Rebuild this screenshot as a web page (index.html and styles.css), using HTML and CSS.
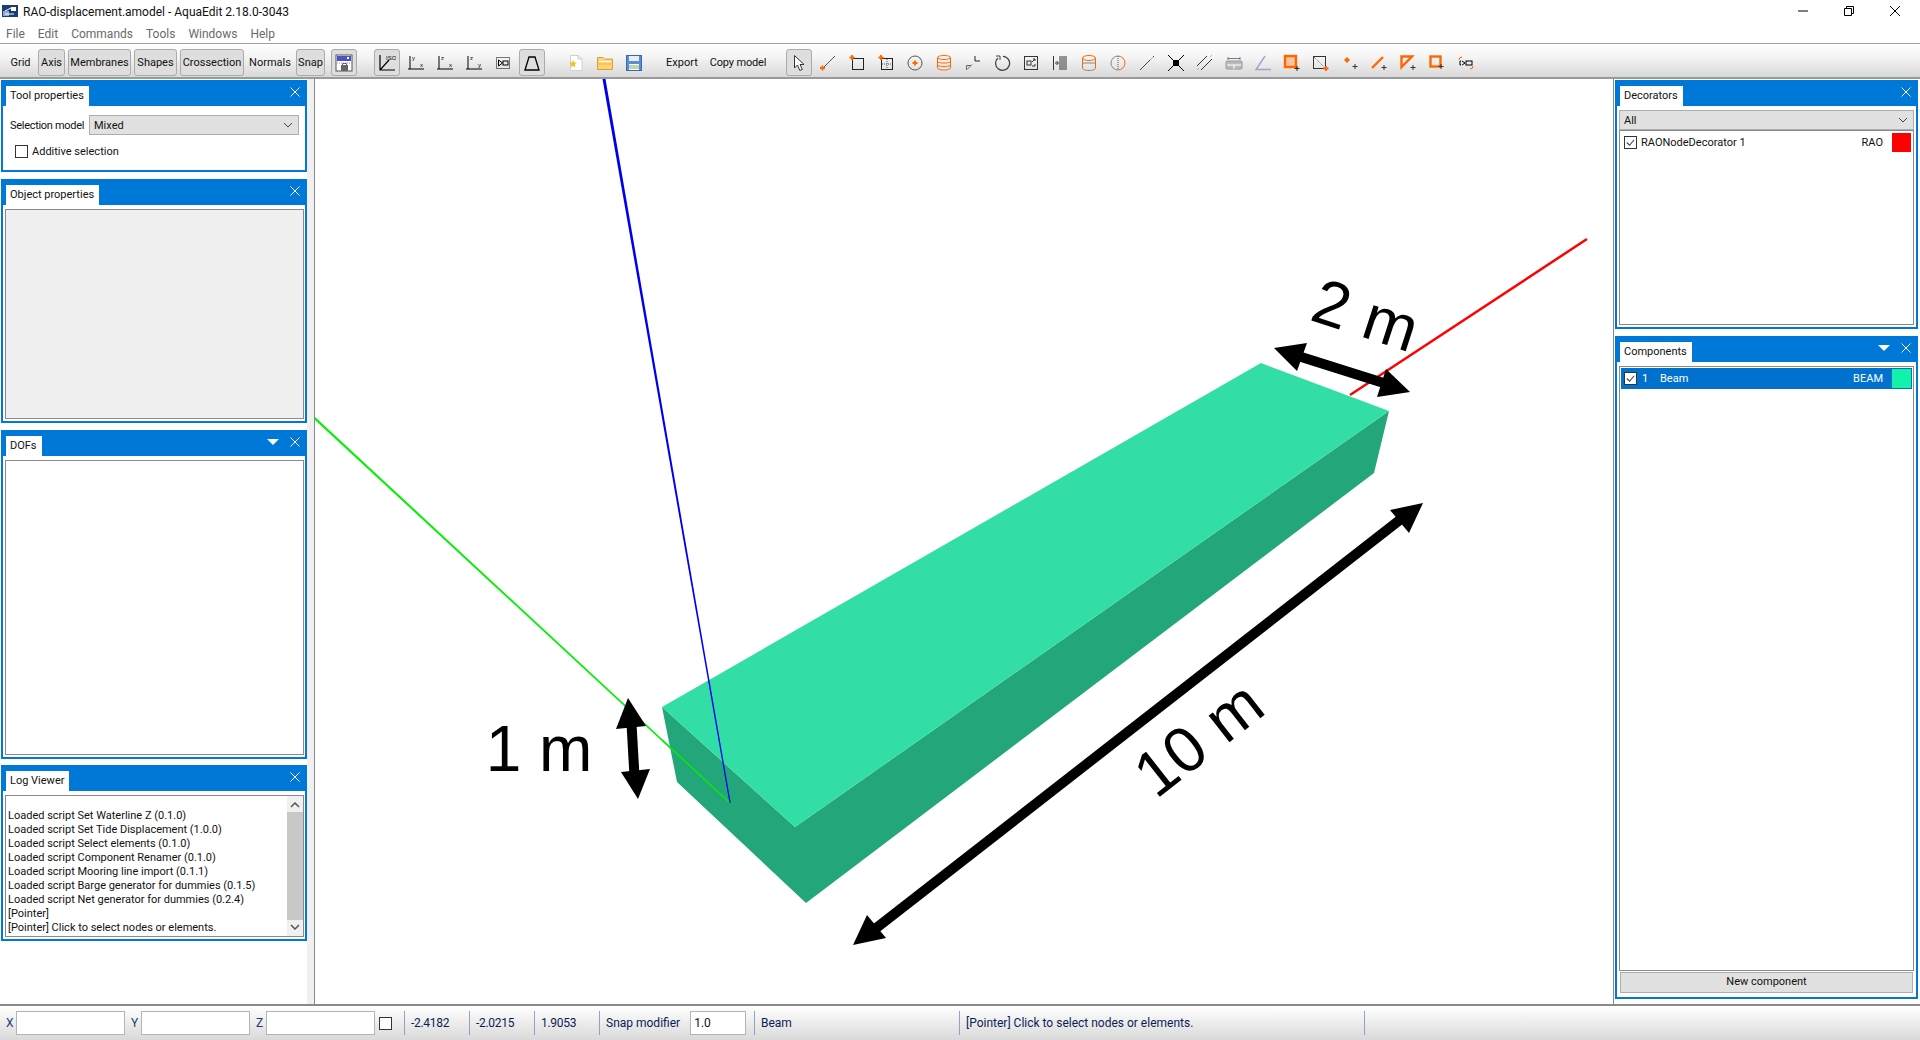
FILE: index.html
```html
<!DOCTYPE html>
<html lang="en">
<head>
<meta charset="utf-8">
<title>RAO-displacement.amodel - AquaEdit 2.18.0-3043</title>
<link rel="stylesheet" href="styles.css">
</head>
<body>
<div class="app">
  <header class="titlebar">
    <svg class="appicon" viewBox="0 0 16 12"><rect width="16" height="12" fill="#1a3c78"/><rect x="1" y="6" width="6" height="5" fill="#8fa8d0"/><rect x="9" y="2" width="5" height="4" fill="#fff"/><path d="M3 6L9 3M3 9L12 9" stroke="#fff" fill="none"/></svg>
    <span class="titletext">RAO-displacement.amodel - AquaEdit 2.18.0-3043</span>
    <div class="winbtns">
      <svg class="winicon" viewBox="0 0 12 12"><path d="M1 6H11" stroke="#000"/></svg>
      <svg class="winicon" viewBox="0 0 12 12"><path d="M1.500 3.500H8.500V10.500H1.500ZM3.500 3.500V1.500H10.500V8.500H8.500" stroke="#000" fill="none"/></svg>
      <svg class="winicon" viewBox="0 0 12 12"><path d="M1 1L11 11M11 1L1 11" stroke="#000"/></svg>
    </div>
  </header>
  <nav class="menubar"><span>File</span><span>Edit</span><span>Commands</span><span>Tools</span><span>Windows</span><span>Help</span></nav>
  <div class="toolbar">
    <span class="tb t-grid">Grid</span>
    <span class="tb on t-axis">Axis</span>
    <span class="tb on t-mem">Membranes</span>
    <span class="tb on t-sha">Shapes</span>
    <span class="tb on t-cro">Crossection</span>
    <span class="tb t-nor">Normals</span>
    <span class="tb on t-sna">Snap</span>
    <span class="tb on ic g0"><svg class="i" viewBox="0 0 18 18"><rect x="1" y="1" width="16" height="16" fill="#fff" stroke="#555"/><rect x="2" y="2" width="14" height="5" fill="#4a52c8"/><path d="M12 3l2 2M14 3l-2 2" stroke="#fff"/><path d="M2 9h14" stroke="#999" stroke-dasharray="1 1"/><rect x="6" y="11" width="7" height="6" fill="#666"/><path d="M7.500 11V9.500h4V11" stroke="#666" fill="none"/></svg></span>
    <span class="tb on ic g1"><svg class="i" viewBox="0 0 18 18"><path d="M2 1V16H17M2 16L11 6" stroke="#000" fill="none" stroke-width="1.200"/><text x="8" y="6" class="it">ISO</text></svg></span>
    <span class="tb ic"><svg class="i" viewBox="0 0 18 18"><path d="M3 2V15H17M1 15H3" stroke="#000" fill="none"/><text x="5" y="6" class="it">y</text><text x="13" y="13" class="it">x</text></svg></span>
    <span class="tb ic"><svg class="i" viewBox="0 0 18 18"><path d="M3 2V15H17M1 15H3" stroke="#000" fill="none"/><text x="5" y="6" class="it">z</text><text x="13" y="13" class="it">x</text></svg></span>
    <span class="tb ic"><svg class="i" viewBox="0 0 18 18"><path d="M3 2V15H17M1 15H3" stroke="#000" fill="none"/><text x="5" y="6" class="it">z</text><text x="13" y="13" class="it">y</text></svg></span>
    <span class="tb ic"><svg class="i" viewBox="0 0 18 18"><rect x="2.500" y="3.500" width="13" height="11" fill="none" stroke="#000" stroke-dasharray="1 1"/><path d="M4.500 6V12L8.500 9Z" fill="none" stroke="#000"/><rect x="9" y="7" width="5" height="4" fill="none" stroke="#000"/></svg></span>
    <span class="tb on ic"><svg class="i" viewBox="0 0 18 18"><path d="M2 16L6 3H12L16 16Z" fill="none" stroke="#000" stroke-width="1.300"/></svg></span>
    <span class="tb ic g2"><svg class="i" viewBox="0 0 18 18"><path d="M3.500 1.500H11L15 5V16.500H3.500Z" fill="#fff" stroke="#cfcfcf"/><path d="M11 1.500V5H15" fill="#eee" stroke="#cfcfcf"/><path d="M6 6l1.200 2.400 2.600.4-1.900 1.800.5 2.600L6 11.900l-2.400 1.300.5-2.600L2.200 8.800l2.600-.4Z" fill="#f6c02c"/></svg></span>
    <span class="tb ic"><svg class="i" viewBox="0 0 18 18"><path d="M1.500 3.500H7L8.500 5H16.500V15.500H1.500Z" fill="#fbd477" stroke="#d9a030"/><path d="M3 7.500H15" stroke="#fff"/><path d="M1.500 10H16.500" stroke="#f2b840"/></svg></span>
    <span class="tb ic"><svg class="i" viewBox="0 0 18 18"><rect x="1.500" y="1.500" width="15" height="15" fill="#5a8ed6" stroke="#3a68b0"/><rect x="4" y="2" width="10" height="5" fill="#e8eef8"/><rect x="4" y="10" width="10" height="6" fill="#fff"/><path d="M4 12H14M4 14H14" stroke="#7ab45a"/></svg></span>
    <span class="tb t-exp">Export</span>
    <span class="tb t-cop">Copy model</span>
    <span class="tb on ic g3"><svg class="i" viewBox="0 0 18 18"><path d="M4.500 1.500V14L7.500 11L9.800 16.500L12.300 15.400L10 10.500H14Z" fill="#fff" stroke="#333"/></svg></span>
    <span class="tb ic"><svg class="i" viewBox="0 0 18 18"><path d="M4 14L16 2" stroke="#555"/><path d="M3.500 11.500v5M1 14h5" stroke="#f60" stroke-width="1.800"/></svg></span>
    <span class="tb ic"><svg class="i" viewBox="0 0 18 18"><rect x="4.500" y="4.500" width="11" height="11" fill="none" stroke="#222"/><path d="M4 1v5M1.500 3.500h5" stroke="#f60" stroke-width="1.800"/></svg></span>
    <span class="tb ic"><svg class="i" viewBox="0 0 18 18"><rect x="4.500" y="4.500" width="11" height="11" fill="none" stroke="#222"/><path d="M10 5v10M5 10h10" stroke="#555" stroke-dasharray="1 1"/><path d="M4 1v5M1.500 3.500h5" stroke="#f60" stroke-width="1.800"/></svg></span>
    <span class="tb ic"><svg class="i" viewBox="0 0 18 18"><circle cx="9" cy="9" r="7" fill="none" stroke="#555"/><path d="M9 6.500v5M6.500 9h5" stroke="#f60" stroke-width="1.800"/></svg></span>
    <span class="tb ic"><svg class="i" viewBox="0 0 18 18"><g fill="none" stroke="#f60"><ellipse cx="9" cy="3.500" rx="6.500" ry="2"/><path d="M2.500 7C2.500 8.300 5 9 9 9S15.500 8.300 15.500 7M2.500 10.500C2.500 11.800 5 12.500 9 12.500S15.500 11.800 15.500 10.500M2.500 3.500V14C2.500 15 5 16 9 16S15.500 15 15.500 14V3.500"/></g></svg></span>
    <span class="tb ic"><svg class="i" viewBox="0 0 18 18"><path d="M11 2V7H16" stroke="#222" fill="none"/><path d="M2.500 16V11.500H7M3 15.500L8 10.500" stroke="#666" fill="none"/></svg></span>
    <span class="tb ic"><svg class="i" viewBox="0 0 18 18"><path d="M5 4A7 7 0 1 0 10 2.300" fill="none" stroke="#444" stroke-width="1.300"/><path d="M3 2H7V6" fill="none" stroke="#444"/></svg></span>
    <span class="tb ic"><svg class="i" viewBox="0 0 18 18"><rect x="2.500" y="2.500" width="13" height="13" fill="none" stroke="#333"/><rect x="5" y="7" width="4" height="4" fill="none" stroke="#333"/><path d="M10 8l3-3M11 5h2v2M10 12h3v-2" stroke="#333" fill="none"/></svg></span>
    <span class="tb ic"><svg class="i" viewBox="0 0 18 18"><path d="M2.500 2V16M9 2V16M11 2V16M13 2V16M15 2V16" stroke="#333" fill="none"/><path d="M4 9H7M5.500 7L7.500 9L5.500 11" stroke="#333" fill="none"/></svg></span>
    <span class="tb ic"><svg class="i" viewBox="0 0 18 18"><ellipse cx="9" cy="4" rx="6.500" ry="2.500" fill="none" stroke="#f60"/><path d="M2.500 4V14M15.500 4V14" stroke="#f60"/><path d="M2.500 9H15.500" stroke="#888"/><path d="M2.500 14C2.500 15.500 5 16.500 9 16.500S15.500 15.500 15.500 14" fill="none" stroke="#888"/></svg></span>
    <span class="tb ic"><svg class="i" viewBox="0 0 18 18"><path d="M9 2A7 7 0 0 0 9 16" fill="none" stroke="#888"/><path d="M9 2A7 7 0 0 1 9 16" fill="none" stroke="#f60"/><path d="M9 2V16" stroke="#555" stroke-dasharray="1 1"/></svg></span>
    <span class="tb ic"><svg class="i" viewBox="0 0 18 18"><path d="M2 16L16 2" stroke="#444"/><path d="M12 6L15 3" stroke="#e8a030"/></svg></span>
    <span class="tb ic"><svg class="i" viewBox="0 0 18 18"><path d="M1 1L17 17M17 1L1 17" stroke="#000"/><rect x="6" y="6" width="6" height="6" fill="#000"/></svg></span>
    <span class="tb ic"><svg class="i" viewBox="0 0 18 18"><path d="M1 12L11 2M5 16L16 5" stroke="#333"/><path d="M1 16L3 14M14 3L16 1" stroke="#c8b080"/></svg></span>
    <span class="tb ic"><svg class="i" viewBox="0 0 18 18"><rect x="1" y="7" width="16" height="8" rx="1" fill="#b8bcc0" stroke="#999"/><path d="M2 11H16M9 11V15" stroke="#fff"/><path d="M3 3V6M15 3V6M3 4.500H15" stroke="#778"/></svg></span>
    <span class="tb ic"><svg class="i" viewBox="0 0 18 18"><path d="M11 2L2 15.500H17" fill="none" stroke="#9aa6c8" stroke-width="1.400"/></svg></span>
    <span class="tb ic"><svg class="i" viewBox="0 0 18 18"><rect x="2" y="2" width="11" height="11" fill="#ffc39a" stroke="#f60" stroke-width="2.400"/><path d="M14 12v5M11.500 14.500h5" stroke="#222"/></svg></span>
    <span class="tb ic"><svg class="i" viewBox="0 0 18 18"><rect x="1.500" y="2.500" width="12" height="12" fill="none" stroke="#333"/><path d="M2 3L13 14" stroke="#666" stroke-dasharray="1 1"/><path d="M14 12v5M11.500 14.500h5" stroke="#f60" stroke-width="1.800"/></svg></span>
    <span class="tb ic"><svg class="i" viewBox="0 0 18 18"><path d="M6 3L9 6L6 9L3 6Z" fill="#f60"/><path d="M14 10v5M11.500 12.500h5" stroke="#333"/></svg></span>
    <span class="tb ic"><svg class="i" viewBox="0 0 18 18"><path d="M2 14L13 3" stroke="#f60" stroke-width="2.400"/><path d="M14 11v5M11.500 13.500h5" stroke="#333"/></svg></span>
    <span class="tb ic"><svg class="i" viewBox="0 0 18 18"><path d="M2.500 2.500H13L2.500 13Z" fill="none" stroke="#f60" stroke-width="2.400"/><path d="M14 11v5M11.500 13.500h5" stroke="#333"/></svg></span>
    <span class="tb ic"><svg class="i" viewBox="0 0 18 18"><rect x="2.500" y="2.500" width="10" height="10" fill="none" stroke="#f60" stroke-width="2.400"/><path d="M13 10v5M10.500 12.500h5" stroke="#333"/></svg></span>
    <span class="tb ic"><svg class="i" viewBox="0 0 18 18"><path d="M5 3A3 3 0 0 0 2 6M13 15A3 3 0 0 0 16 12" fill="none" stroke="#f60"/><path d="M4 7H3V11H4M5 7L8 9L5 11" fill="none" stroke="#000"/><rect x="9" y="7" width="6" height="4" fill="none" stroke="#000"/></svg></span>
  </div>
  <div class="main">
    <aside class="dock-left">
      <section class="panel p-tool">
        <div class="phead"><span class="ptab">Tool properties</span><svg class="x" viewBox="0 0 10 10"><path d="M0.500 0.500L9.500 9.500M9.500 0.500L0.500 9.500" stroke="#fff"/></svg></div>
        <div class="pbody tool-body">
          <div class="sel-row"><span class="sel-label">Selection model</span><div class="combo c-sel"><span>Mixed</span><svg class="chev" viewBox="0 0 10 6"><path d="M1 1L5 5L9 1" stroke="#444" fill="none"/></svg></div></div>
          <label class="add-row"><span class="cb"></span><span>Additive selection</span></label>
        </div>
      </section>
      <section class="panel p-obj">
        <div class="phead"><span class="ptab">Object properties</span><svg class="x" viewBox="0 0 10 10"><path d="M0.500 0.500L9.500 9.500M9.500 0.500L0.500 9.500" stroke="#fff"/></svg></div>
        <div class="pbody"><div class="frame grey"></div></div>
      </section>
      <section class="panel p-dof">
        <div class="phead"><span class="ptab">DOFs</span><span class="tri"></span><svg class="x" viewBox="0 0 10 10"><path d="M0.500 0.500L9.500 9.500M9.500 0.500L0.500 9.500" stroke="#fff"/></svg></div>
        <div class="pbody"><div class="frame"></div></div>
      </section>
      <section class="panel p-log">
        <div class="phead"><span class="ptab">Log Viewer</span><svg class="x" viewBox="0 0 10 10"><path d="M0.500 0.500L9.500 9.500M9.500 0.500L0.500 9.500" stroke="#fff"/></svg></div>
        <div class="pbody"><div class="frame logframe">
          <div class="logtext">
            <div>Loaded script Set Waterline Z (0.1.0)</div>
            <div>Loaded script Set Tide Displacement (1.0.0)</div>
            <div>Loaded script Select elements (0.1.0)</div>
            <div>Loaded script Component Renamer (0.1.0)</div>
            <div>Loaded script Mooring line import (0.1.1)</div>
            <div>Loaded script Barge generator for dummies (0.1.5)</div>
            <div>Loaded script Net generator for dummies (0.2.4)</div>
            <div>[Pointer]</div>
            <div>[Pointer] Click to select nodes or elements.</div>
          </div>
          <div class="scroll">
            <svg class="sarrow" viewBox="0 0 10 6"><path d="M1 5L5 1L9 5" stroke="#555" stroke-width="1.500" fill="none"/></svg>
            <div class="thumb"></div>
            <svg class="sarrow" viewBox="0 0 10 6"><path d="M1 1L5 5L9 1" stroke="#555" stroke-width="1.500" fill="none"/></svg>
          </div>
        </div></div>
      </section>
    </aside>
    <main class="viewport">
      <svg class="scene" viewBox="315 79 1298 925" preserveAspectRatio="none">
        <polygon points="315,417 315,420 730,804 730,802" fill="#00f000"/>
        <polygon points="662,707 795,827 1389,411 1374,473 806,903 677,782" fill="#22a67a"/>
        <polygon points="662,707 1261,363 1389,411 795,827" fill="#33dea6"/>
        <line x1="730" y1="803" x2="662" y2="740" stroke="#00f000" stroke-width="1.500"/>
        <polygon points="602.500,79 605.500,79 730.700,803 729.500,803" fill="#0000f0"/>
        <line x1="1350" y1="395" x2="1587" y2="239" stroke="#ff0000" stroke-width="2.500"/>
        <g class="arrow">
          <line x1="1295" y1="355" x2="1390" y2="385" stroke="#000" stroke-width="10"/>
          <polygon points="1274,348 1307,343 1297,371"/>
          <polygon points="1410,392 1386,369 1377,397"/>
          <line x1="631" y1="715" x2="635" y2="785" stroke="#000" stroke-width="10"/>
          <polygon points="628,698 616,729 646,726"/>
          <polygon points="638,799 621,772 650,769"/>
          <line x1="875" y1="929" x2="1401" y2="519" stroke="#000" stroke-width="10"/>
          <polygon points="853,945 867,915 886,938"/>
          <polygon points="1423,503 1409,533 1390,510"/>
        </g>
        <text class="dim" x="539" y="771" text-anchor="middle">1 m</text>
        <text class="dim" text-anchor="middle" transform="translate(1359 336) rotate(18)">2 m</text>
        <text class="dim" text-anchor="middle" transform="translate(1212 756) rotate(-38)">10 m</text>
      </svg>
    </main>
    <aside class="dock-right">
      <section class="panel p-dec">
        <div class="phead"><span class="ptab">Decorators</span><svg class="x" viewBox="0 0 10 10"><path d="M0.500 0.500L9.500 9.500M9.500 0.500L0.500 9.500" stroke="#fff"/></svg></div>
        <div class="pbody rbody">
          <div class="combo c-all"><span>All</span><svg class="chev" viewBox="0 0 10 6"><path d="M1 1L5 5L9 1" stroke="#444" fill="none"/></svg></div>
          <div class="frame list">
            <div class="lrow"><span class="cb ck"><svg viewBox="0 0 12 12"><path d="M2 6L5 9L10 3" stroke="#444" stroke-width="1.200" fill="none"/></svg></span><span class="lname">RAONodeDecorator 1</span><span>RAO</span><span class="sw red"></span></div>
          </div>
        </div>
      </section>
      <section class="panel p-comp">
        <div class="phead"><span class="ptab">Components</span><span class="tri"></span><svg class="x" viewBox="0 0 10 10"><path d="M0.500 0.500L9.500 9.500M9.500 0.500L0.500 9.500" stroke="#fff"/></svg></div>
        <div class="pbody rbody">
          <div class="frame list">
            <div class="lrow selected"><span class="cb ck wh"><svg viewBox="0 0 12 12"><path d="M2 6L5 9L10 3" stroke="#444" stroke-width="1.200" fill="none"/></svg></span><span class="lnum">1</span><span class="lname">Beam</span><span>BEAM</span><span class="sw green"></span></div>
          </div>
          <div class="btn-new">New component</div>
        </div>
      </section>
    </aside>
  </div>
  <footer class="status">
    <span class="sl">X</span><span class="inp"></span>
    <span class="sl">Y</span><span class="inp"></span>
    <span class="sl">Z</span><span class="inp"></span>
    <span class="cb st-cb"></span>
    <span class="cell c1 num">-2.4182</span>
    <span class="cell c1 num">-2.0215</span>
    <span class="cell c1 num">1.9053</span>
    <span class="cell c2">Snap modifier<span class="snapin">1.0</span></span>
    <span class="cell c3">Beam</span>
    <span class="cell c4">[Pointer] Click to select nodes or elements.</span>
    <span class="cell c5"></span>
  </footer>
</div>
</body>
</html>
```

FILE: styles.css
```css
* { box-sizing: border-box; }
html, body { margin: 0; padding: 0; height: 100%; }
body { background: #fff; font: 12px "Roboto", "Liberation Sans", sans-serif; color: #111; overflow: hidden; }
.app { width: 1920px; height: 1040px; display: flex; flex-direction: column; }

.titlebar { height: 22px; display: flex; align-items: center; padding-left: 2px; flex: none; }
.appicon { width: 16px; height: 12px; margin-right: 5px; }
.titletext { font-size: 12px; padding-top: 2px; }
.winbtns { margin-left: auto; display: flex; gap: 34px; padding-right: 19px; }
.winicon { width: 12px; height: 12px; display: block; }

.menubar { height: 22px; flex: none; display: flex; align-items: center; padding: 2px 0 0 6px; color: #6a6a6a; border-bottom: 1px solid #a0a0a0; }
.menubar span { margin-right: 13px; }

.toolbar { height: 35px; flex: none; display: flex; align-items: center; gap: 3px; padding: 4px 0 0 6px; font-size: 11px; background: linear-gradient(#ffffff, #f4f4f4 40%, #d8d8d8); border-bottom: 2px solid #9a9a9a; }
.tb { height: 27px; display: flex; align-items: center; justify-content: center; border: 1px solid transparent; border-radius: 3px; white-space: nowrap; flex: none; }
.tb.on { background: #dedede; border-color: #ababab; }
.ic { width: 26px; }
.i { width: 18px; height: 18px; display: block; }
.it { font: 6px "Liberation Sans", sans-serif; fill: #000; }
.t-grid { width: 29px; }
.t-axis { width: 27px; }
.t-mem { width: 63px; }
.t-sha { width: 43px; }
.t-cro { width: 64px; }
.t-nor { width: 46px; }
.t-sna { width: 29px; }
.g0 { margin-left: 3px; }
.g1 { margin-left: 14px; }
.g2 { margin-left: 15px; }
.g3 { margin-left: 14px; }
.t-exp { width: 40px; margin-left: 12px; }
.t-cop { width: 62px; margin-left: 2px; letter-spacing: -0.15px; }

.main { flex: 1; display: flex; min-height: 0; }
.dock-left { width: 315px; flex: none; display: flex; flex-direction: column; padding: 1px 7px 0 1px; border-right: 1px solid #8a8a8a; background: linear-gradient(90deg, #fff 307px, #f0f0f0 307px); }
.dock-right { width: 307px; flex: none; display: flex; flex-direction: column; gap: 7px; padding: 1px 2px 5px 1px; border-left: 1px solid #8a8a8a; }
.viewport { flex: 1; min-width: 0; background: #fff; }
.scene { width: 100%; height: 100%; display: block; }
.dim { font: 64px "Liberation Sans", sans-serif; fill: #000; }
.arrow polygon { fill: #000; }

.panel { border: 1px solid #0078d7; border-width: 0 2px 2px 2px; display: flex; flex-direction: column; background: #fff; flex: none; font-size: 11px; }
.phead { height: 26px; flex: none; background: #0078d7; display: flex; align-items: flex-end; position: relative; margin: 0 -2px; padding-left: 5px; }
.ptab { height: 20px; background: #fff; padding: 0 5px 2px 4px; display: flex; align-items: center; color: #111; }
.x { width: 10px; height: 10px; position: absolute; right: 7px; top: 7px; }
.tri { position: absolute; right: 28px; top: 9px; width: 0; height: 0; border: 6px solid transparent; border-top-color: #fff; border-bottom-width: 0; }
.pbody { flex: 1; min-height: 0; display: flex; flex-direction: column; padding: 4px 1px 2px 2px; }
.frame { flex: 1; min-height: 0; border: 1px solid #8a8a8a; background: #fff; }
.frame.grey { background: #f0f0f0; }

.p-tool { height: 92px; }
.p-obj { height: 244px; margin-top: 7px; }
.p-dof { height: 329px; margin-top: 7px; }
.p-log { height: 176px; margin-top: 6px; }
.p-dec { height: 249px; }
.p-comp { height: 663px; }

.tool-body { padding: 9px 6px 0 7px; }
.sel-row { display: flex; align-items: center; justify-content: space-between; white-space: nowrap; }
.sel-label { letter-spacing: -0.3px; }
.combo { height: 20px; background: #e1e1e1; border: 1px solid #adadad; display: flex; align-items: center; justify-content: space-between; padding: 0 5px 0 4px; flex: none; }
.c-sel { width: 210px; }
.chev { width: 10px; height: 6px; }
.add-row { display: flex; align-items: center; gap: 4px; margin: 10px 0 0 5px; }
.cb { width: 13px; height: 13px; border: 1px solid #333; background: #fff; display: block; flex: none; }
.cb svg { display: block; width: 11px; height: 11px; }

.rbody { padding: 4px 2px 2px; }
.c-all { height: 20px; }
.list { padding: 1px 1px; }
.lrow { display: flex; align-items: center; height: 20px; padding: 0 1px 0 3px; gap: 4px; }
.lname { flex: 1; }
.lnum { width: 14px; margin-left: 1px; }
.sw { width: 19px; height: 19px; margin-left: 5px; }
.red { background: #ff0000; }
.green { background: #12f2a8; }
.selected { background: #0072ce; color: #fff; height: 21px; }
.btn-new { height: 21px; flex: none; background: #e1e1e1; border: 1px solid #adadad; margin: 1px 1px 2px; padding-bottom: 2px; display: flex; align-items: center; justify-content: center; }

.logframe { display: flex; }
.logtext { flex: 1; padding: 13px 0 0 2px; line-height: 14px; white-space: nowrap; overflow: hidden; }
.scroll { width: 16px; flex: none; background: #f0f0f0; display: flex; flex-direction: column; align-items: center; justify-content: space-between; padding: 6px 0; }
.thumb { width: 100%; flex: 1; background: #c8c8c8; margin: 4px 0; }
.sarrow { width: 10px; height: 6px; }

.status { height: 36px; flex: none; display: flex; align-items: center; padding: 0 0 0 6px; background: linear-gradient(#fff, #f2f2f2 35%, #d9d9d9); border-top: 2px solid #8a8a8a; color: #0c1c55; }
.sl { width: 10px; color: #223a78; }
.inp { width: 109px; height: 24px; background: #fff; border: 1px solid #b4b4b4; margin-right: 6px; }
.st-cb { margin: 0 12px 0 -2px; }
.cell { height: 24px; display: flex; align-items: center; border-left: 1px solid #8fa3c4; padding-left: 6px; flex: none; }
.num { letter-spacing: -0.3px; }
.c1 { width: 65px; }
.c2 { width: 155px; }
.c3 { width: 205px; }
.c4 { width: 405px; }
.c5 { width: 10px; }
.snapin { width: 56px; height: 24px; background: #fff; border: 1px solid #b4b4b4; margin-left: 10px; padding-left: 3px; display: flex; align-items: center; color: #111; }
```
